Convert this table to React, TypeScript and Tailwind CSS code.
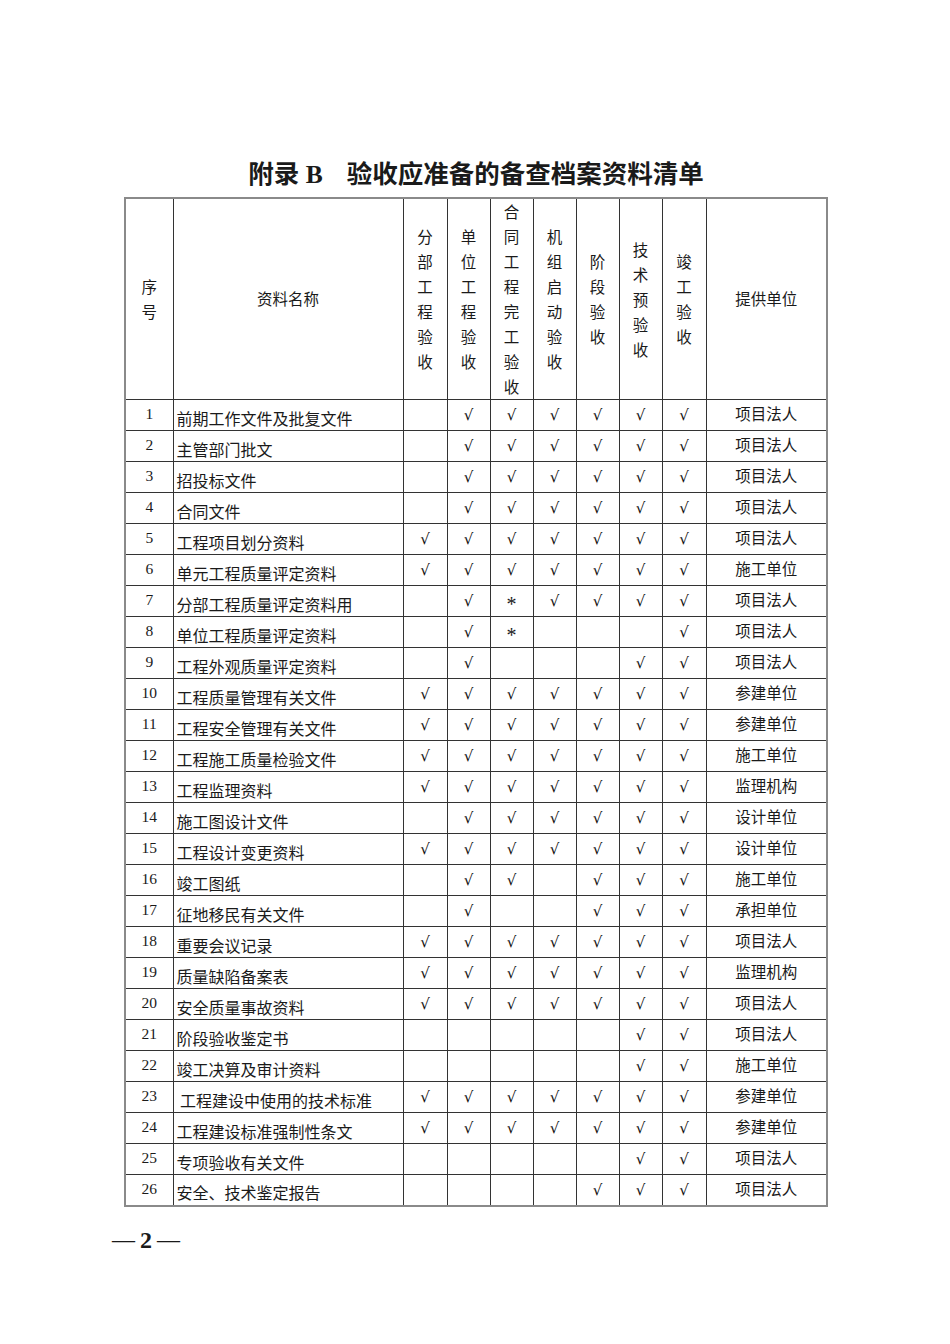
const cols = ["分部工程验收", "单位工程验收", "合同工程完工验收", "机组启动验收", "阶段验收", "技术预验收", "竣工验收"];

type Row = [string, string, string];

// marks: one char per column, v = √, s = *, - = empty
const rows: Row[] = [
  ["前期工作文件及批复文件", "-vvvvvv", "项目法人"],
  ["主管部门批文", "-vvvvvv", "项目法人"],
  ["招投标文件", "-vvvvvv", "项目法人"],
  ["合同文件", "-vvvvvv", "项目法人"],
  ["工程项目划分资料", "vvvvvvv", "项目法人"],
  ["单元工程质量评定资料", "vvvvvvv", "施工单位"],
  ["分部工程质量评定资料用", "-vsvvvv", "项目法人"],
  ["单位工程质量评定资料", "-vs---v", "项目法人"],
  ["工程外观质量评定资料", "-v---vv", "项目法人"],
  ["工程质量管理有关文件", "vvvvvvv", "参建单位"],
  ["工程安全管理有关文件", "vvvvvvv", "参建单位"],
  ["工程施工质量检验文件", "vvvvvvv", "施工单位"],
  ["工程监理资料", "vvvvvvv", "监理机构"],
  ["施工图设计文件", "-vvvvvv", "设计单位"],
  ["工程设计变更资料", "vvvvvvv", "设计单位"],
  ["竣工图纸", "-vv-vvv", "施工单位"],
  ["征地移民有关文件", "-v--vvv", "承担单位"],
  ["重要会议记录", "vvvvvvv", "项目法人"],
  ["质量缺陷备案表", "vvvvvvv", "监理机构"],
  ["安全质量事故资料", "vvvvvvv", "项目法人"],
  ["阶段验收鉴定书", "-----vv", "项目法人"],
  ["竣工决算及审计资料", "-----vv", "施工单位"],
  ["\u00a0工程建设中使用的技术标准", "vvvvvvv", "参建单位"],
  ["工程建设标准强制性条文", "vvvvvvv", "参建单位"],
  ["专项验收有关文件", "-----vv", "项目法人"],
  ["安全、技术鉴定报告", "----vvv", "项目法人"],
];

const colWidths = ["w-[44px]", "w-[43px]", "w-[43px]", "w-[43px]", "w-[43px]", "w-[43px]", "w-[44px]"];

const font = { fontFamily: '"Liberation Serif", "Noto Sans CJK SC", serif' };
const cjk = { fontFamily: '"Noto Sans CJK SC", sans-serif' };

function Mark({ m }: { m: string }) {
  if (m === "v") return <span className="text-[15px] text-[#111]" style={{ fontFamily: '"DejaVu Serif", serif' }}>√</span>;
  if (m === "s") return <span className="text-[20px] leading-none relative top-[3px]">*</span>;
  return null;
}

export default function App() {
  return (
    <div className="w-[950px] h-[1344px] bg-white text-[#1a1a1a]" style={font}>
      <div className="pt-[153px] flex justify-center">
        <h1 className="text-[25.5px] font-bold leading-[38px] pl-[2px]" style={cjk}>
          附录<span style={{ fontFamily: '"Liberation Serif", serif' }}> B</span>
          <span className="inline-block w-[24px]" />
          验收应准备的备查档案资料清单
        </h1>
      </div>
      <div className="pl-[124px] pt-[3px]">
        <table className="border-collapse table-fixed w-[702px] border-2 border-[#8a8a8a]">
          <colgroup>
            <col className="w-[48px]" />
            <col className="w-[230px]" />
            {colWidths.map((w, i) => (
              <col key={i} className={w} />
            ))}
            <col className="w-[121px]" />
          </colgroup>
          <thead>
            <tr className="h-[198px] text-[15.5px]" style={cjk}>
              <th className="border border-[#333] font-normal leading-[25px]">
                <div className="flex flex-col items-center">
                  <span>序</span>
                  <span>号</span>
                </div>
              </th>
              <th className="border border-[#333] font-normal">资料名称</th>
              {cols.map((c) => (
                <th key={c} className="border border-[#333] font-normal leading-[25px]">
                  <div className="flex flex-col items-center">
                    {c.split("").map((ch, i) => (
                      <span key={i}>{ch}</span>
                    ))}
                  </div>
                </th>
              ))}
              <th className="border border-[#333] font-normal">提供单位</th>
            </tr>
          </thead>
          <tbody>
            {rows.map(([name, marks, unit], i) => (
              <tr key={i} className="h-[31px]">
                <td className="border border-[#333] text-center text-[15.5px] leading-none pb-[3px]">{i + 1}</td>
                <td className="border border-[#333] pl-[3px] pt-[5px] text-[16px] leading-none whitespace-pre" style={cjk}>
                  {name}
                </td>
                {marks.split("").map((m, j) => (
                  <td key={j} className="border border-[#333] text-center leading-none">
                    <Mark m={m} />
                  </td>
                ))}
                <td className="border border-[#333] text-center text-[15.5px] leading-none pb-[3px]" style={cjk}>
                  {unit}
                </td>
              </tr>
            ))}
          </tbody>
        </table>
      </div>
      <div className="pl-[112px] pt-[21px] flex items-center gap-[5px] text-[23px] leading-none">
        <span className="font-normal">—</span>
        <span className="font-bold text-[24px]">2</span>
        <span className="font-normal">—</span>
      </div>
    </div>
  );
}
